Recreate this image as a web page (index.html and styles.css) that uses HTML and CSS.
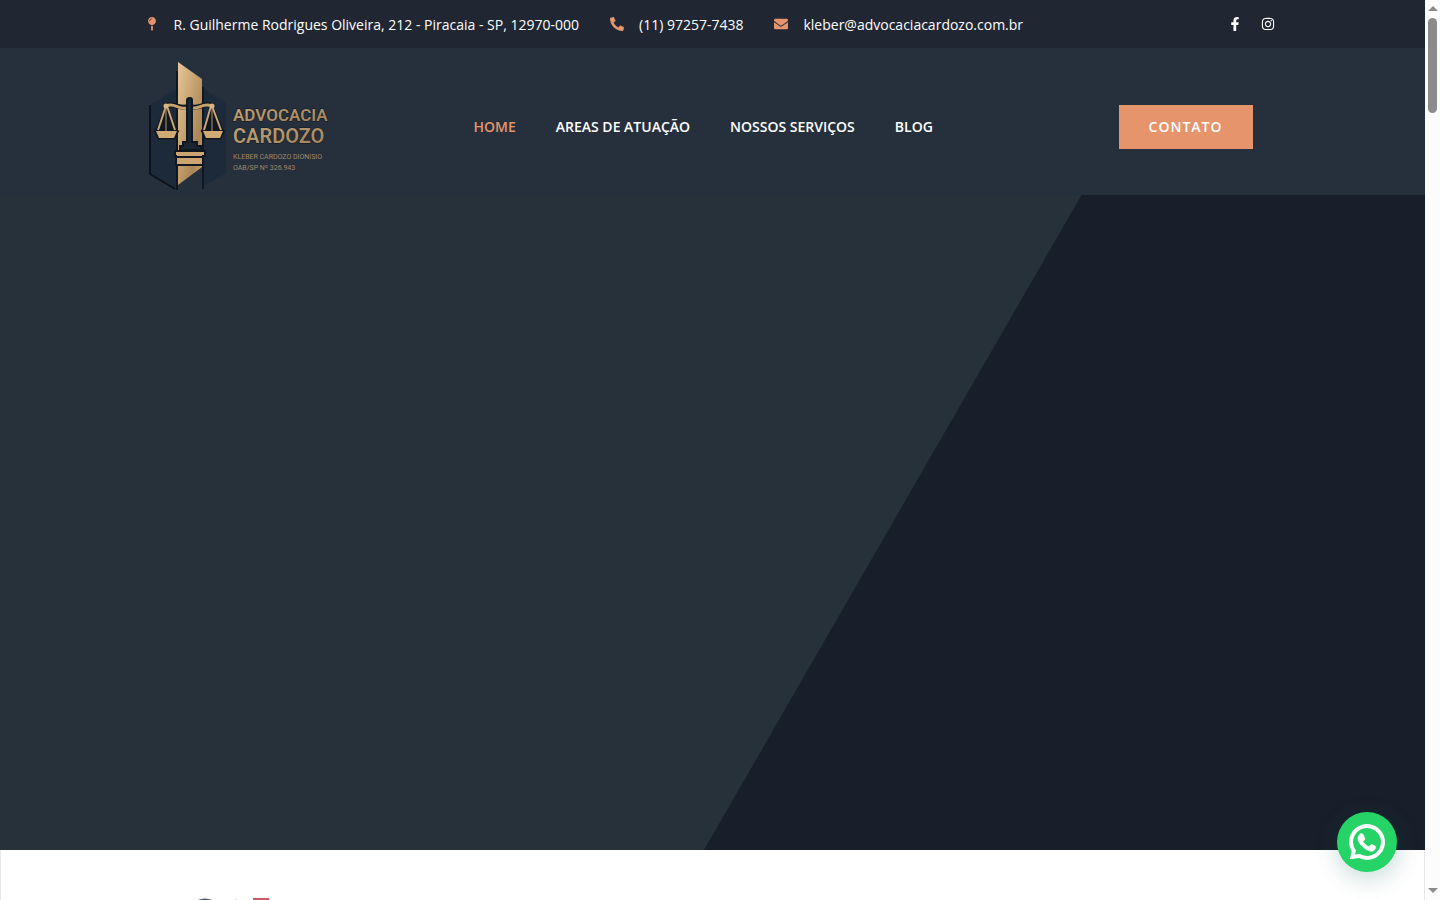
FILE: index.html
```
<!DOCTYPE html>
<html lang="pt-BR">
<head>
<meta charset="utf-8">
<meta name="viewport" content="width=device-width, initial-scale=1">
<title>Advocacia Cardozo</title>
<link rel="stylesheet" href="styles.css">
</head>
<body>
<div class="window">
  <div class="page">
    <div class="topbar">
      <div class="container topbar-inner">
        <ul class="contacts">
          <li><svg class="icon" viewBox="0 0 288 512" aria-hidden="true"><path d="M112 316.94v156.69l22.02 33.02c4.75 7.12 15.22 7.12 19.97 0L176 473.63V316.94c-10.39 1.92-21.06 3.06-32 3.06s-21.61-1.14-32-3.06zM144 0C64.47 0 0 64.47 0 144s64.47 144 144 144 144-64.47 144-144S223.53 0 144 0zm0 76c-37.5 0-68 30.5-68 68 0 6.62-5.38 12-12 12s-12-5.38-12-12c0-50.73 41.28-92 92-92 6.62 0 12 5.38 12 12s-5.38 12-12 12z"/></svg><span>R. Guilherme Rodrigues Oliveira, 212 - Piracaia - SP, 12970-000</span></li>
          <li><svg class="icon" viewBox="0 0 512 512" aria-hidden="true"><path d="M493.4 24.6l-104-24c-11.3-2.6-22.9 3.3-27.5 13.9l-48 112c-4.2 9.8-1.4 21.3 6.9 28l60.6 49.6c-36 76.7-98.9 140.5-177.2 177.2l-49.6-60.6c-6.8-8.3-18.2-11.1-28-6.9l-112 48C3.900 366.500-2 378.100.6 389.400l24 104C27.100 504.200 36.700 512 48 512c256.100 0 464-207.500 464-464 0-11.200-7.700-20.900-18.600-23.400z" transform="matrix(-1 0 0 1 512 0)"/></svg><span>(11) 97257-7438</span></li>
          <li><svg class="icon" viewBox="0 0 512 512" aria-hidden="true"><path d="M502.3 190.800c3.900-3.100 9.700-.2 9.700 4.700V400c0 26.500-21.500 48-48 48H48c-26.500 0-48-21.500-48-48V195.600c0-5 5.700-7.800 9.700-4.700 22.400 17.400 52.100 39.500 154.100 113.600 21.100 15.400 56.700 47.800 92.200 47.600 35.700.3 72-32.800 92.300-47.600 102-74.100 131.600-96.300 154-113.700zM256 320c23.200.4 56.600-29.200 73.400-41.400 132.700-96.300 142.800-104.700 173.400-128.700 5.800-4.500 9.200-11.500 9.200-18.900v-19c0-26.500-21.500-48-48-48H48c-26.500 0-48 21.500-48 48v19c0 7.400 3.400 14.300 9.200 18.900 30.600 23.900 40.700 32.400 173.400 128.700 16.800 12.200 50.200 41.800 73.400 41.400z"/></svg><span>kleber@advocaciacardozo.com.br</span></li>
        </ul>
        <div class="social">
          <a href="#" aria-label="Facebook"><svg class="icon" viewBox="0 0 320 512"><path d="M279.140 288l14.220-92.660h-88.910v-60.130c0-25.350 12.420-50.060 52.240-50.060h40.420V6.260S260.430 0 225.360 0c-73.220 0-121.080 44.380-121.080 124.720v70.620H22.890V288h81.390v224h100.170V288z"/></svg></a>
          <a href="#" aria-label="Instagram"><svg class="icon" viewBox="0 0 448 512"><path d="M224.100 141c-63.600 0-114.900 51.300-114.900 114.900s51.300 114.900 114.900 114.900S339 319.500 339 255.900 287.700 141 224.100 141zm0 189.600c-41.100 0-74.700-33.500-74.700-74.700s33.500-74.700 74.700-74.700 74.700 33.500 74.700 74.700-33.600 74.700-74.700 74.700zm146.400-194.300c0 14.900-12 26.800-26.800 26.800-14.900 0-26.800-12-26.800-26.800s12-26.800 26.800-26.800 26.800 12 26.800 26.800zm76.100 27.200c-1.700-35.900-9.900-67.700-36.200-93.900-26.200-26.200-58-34.400-93.900-36.200-37-2.100-147.900-2.100-184.900 0-35.800 1.700-67.600 9.900-93.900 36.100s-34.400 58-36.200 93.900c-2.100 37-2.100 147.900 0 184.900 1.700 35.900 9.900 67.700 36.200 93.900s58 34.400 93.900 36.200c37 2.100 147.900 2.100 184.900 0 35.900-1.700 67.700-9.900 93.900-36.200 26.200-26.200 34.400-58 36.200-93.900 2.100-37 2.100-147.800 0-184.800zM398.800 388c-7.800 19.600-22.900 34.700-42.600 42.600-29.500 11.700-99.500 9-132.100 9s-102.700 2.600-132.100-9c-19.600-7.800-34.700-22.900-42.600-42.600-11.700-29.500-9-99.500-9-132.100s-2.600-102.700 9-132.100c7.800-19.600 22.900-34.700 42.600-42.600 29.500-11.700 99.500-9 132.100-9s102.700-2.600 132.100 9c19.600 7.800 34.700 22.900 42.600 42.600 11.700 29.500 9 99.500 9 132.100s2.700 102.700-9 132.100z"/></svg></a>
        </div>
      </div>
    </div>

    <header class="header">
      <div class="container header-inner">
        <a class="logo" href="#" aria-label="Advocacia Cardozo">
          <svg viewBox="1 0 190 135" width="190" height="135">
            <defs>
              <linearGradient id="gold" x1="0" y1="0" x2="1" y2="1">
                <stop offset="0" stop-color="#e6c697"/><stop offset=".45" stop-color="#c4a06d"/><stop offset=".75" stop-color="#ab8555"/><stop offset="1" stop-color="#cfab79"/>
              </linearGradient>
              <linearGradient id="type" x1="0" y1="0" x2="1" y2="1">
                <stop offset="0" stop-color="#c4a578"/><stop offset="1" stop-color="#a08059"/>
              </linearGradient>
            </defs>
            <path d="M9 45L35 30V131L9 115Z" fill="#1d2a39"/>
            <path d="M60 29L84 44V114L60 128Z" fill="#1d2a39"/>
            <path d="M8 46V115L33 130" fill="none" stroke="#0d131c" stroke-width="2"/>
            <path d="M62 30L84 44V114L62 127" fill="none" stroke="#222d39"/>
            <path d="M36 3L60 20V108L36 126Z" fill="url(#gold)"/>
            <path d="M35 12V131M61 28V130" stroke="#101720" stroke-width="2"/>
            <path d="M23 47C32 42 38 52 47 47C56 52 62 42 71 47" fill="none" stroke="#101720" stroke-width="5"/>
            <path d="M24 47C32 43 37 51 44 49M51 49C57 50 62 43 70 47" fill="none" stroke="#c9a26f" stroke-width="3"/>
            <g stroke="#101720" stroke-width="3" fill="#101720"><path d="M24 48L15 71H34ZM70 48L61 71H80Z"/><path d="M14 73H35L32 79H17ZM61 73H81L78 79H64Z"/></g>
            <g fill="none" stroke="#c9a675" stroke-width="2"><path d="M24 47L16 71M25 47L33 71M69 47L62 71M70 47L79 71"/></g>
            <path d="M24 49V72M70 49V72" stroke="#b69465"/>
            <circle cx="24" cy="47" r="2.500" fill="#d8b583"/><circle cx="70" cy="47" r="2.500" fill="#d8b583"/>
            <path d="M14 72H35L32 79H17ZM61 72H81L78 79H64Z" fill="#d0aa74"/>
            <path d="M45 41Q45 39 48 39Q50 39 50 41V83H55V87H59V91H38V87H41V83H45Z" fill="#1a2532" stroke="#101720" stroke-width="2"/>
            <path d="M33 92H63V97H61V106H34V97H33Z" fill="#cba570" stroke="#101720" stroke-width="2"/>
            <path d="M34 98H62" stroke="#101720" stroke-width="2"/>
            <g class="logo-text"><text x="91" y="62" class="logo-first">ADVOCACIA</text><text x="91" y="84" class="logo-second">CARDOZO</text></g>
            <g class="logo-small"><text x="91" y="100">KLEBER CARDOZO DIONISIO</text><text x="91" y="111">OAB/SP Nº 326.943</text></g>
          </svg>
        </a>
        <nav class="nav">
          <a class="active" href="#">HOME</a>
          <a href="#">AREAS DE ATUAÇÃO</a>
          <a href="#">NOSSOS SERVIÇOS</a>
          <a href="#">BLOG</a>
        </nav>
        <a class="cta" href="#">CONTATO</a>
      </div>
    </header>

    <main class="main">
      <section class="hero"><div class="hero-shade"></div></section>
      <section class="next">
        <svg class="next-art" width="80" height="60" viewBox="0 0 80 60" aria-hidden="true">
          <circle cx="12" cy="18" r="16" fill="none" stroke="#4b5868" stroke-width="3"/>
          <path d="M43 1V12" stroke="#efb2b2"/><path d="M60 0H76V12H60Z" fill="#c85b61"/>
        </svg>
      </section>
    </main>
    <button class="whatsapp" type="button" aria-label="WhatsApp">
      <svg viewBox="0 0 60 60" width="60" height="60">
        <path d="M12 30A18 18 0 1 1 22 46.100L12.800 47.300L14.700 39.200A18 18 0 0 1 12 30ZM16 30A14 14 0 0 0 19 38.500L17.800 42.700L22.500 41.800A14 14 0 1 0 16 30Z" fill="#fff" fill-rule="evenodd"/>
        <path d="M22.300 22.900Q24 20.800 25.800 22.100L27.800 26.500Q28.200 27.700 25.900 29.500C27.200 32 29.500 34 32 34.900L34 32.700Q34.800 32.200 38.300 34.200Q39 34.800 38 37.300C36.500 39.300 34.300 39.800 31 38.300C26.500 36.300 22.900 32.500 21.300 28.600Q20.300 25.300 22.300 22.900Z" fill="#fff" stroke="#fff" stroke-width=".7"/>
      </svg>
    </button>
  </div>
  <div class="scrollbar" aria-hidden="true"><i class="arrow up"></i><i class="thumb"></i><i class="arrow down"></i></div>
</div>
</body>
</html>
```
FILE: styles.css
```
* { box-sizing: border-box; }
body { margin: 0; font-family: "Open Sans", sans-serif; font-size: 14px; color: #fff; }
a { color: inherit; text-decoration: none; }

.window { display: grid; grid-template-columns: 1fr 15px; height: 100vh; overflow: hidden; }
.page { position: relative; display: flex; flex-direction: column; min-width: 0; min-height: 0; background: #fff; }
.container { width: 100%; max-width: 1140px; margin: 0 auto; }

.topbar { background: #202632; }
.topbar-inner { display: flex; align-items: center; justify-content: space-between; height: 48px; }
.contacts { display: flex; gap: 29px; margin: 0; padding: 0; list-style: none; }
.contacts li { display: flex; align-items: center; gap: 13px; line-height: 20px; white-space: nowrap; }
.icon { display: block; width: 18px; height: 14px; fill: currentColor; }
.contacts .icon { fill: #e6946b; }
.contacts span { padding-top: 1px; }
.social { display: flex; gap: 15px; padding-right: 6px; }

.header { background: #26303c; }
.header-inner { display: grid; grid-template-columns: 331px 1fr auto; align-items: center; padding: 11px 30px 1px 0; }
.logo svg { display: block; }
.logo-text { fill: url(#type); stroke: #0f161f; stroke-width: 1px; paint-order: stroke; font-family: Roboto, sans-serif; font-weight: 600; }
.logo-first { font-size: 17px; }
.logo-second { font-size: 20px; }
.logo-small { fill: #a18767; font-family: Roboto, sans-serif; font-size: 7px; }
.nav { display: flex; gap: 40px; font-weight: 600; line-height: 20px; white-space: nowrap; }
.nav .active { color: #e6946b; }
.cta { padding: 12px 30px; background: #e6946b; font-weight: 600; line-height: 20px; letter-spacing: 1px; }

.main { display: flex; flex: 1; flex-direction: column; min-height: 0; }
.hero { flex: 1; background: #27313a; }
.hero-shade { height: 100%; background: #191f2a; clip-path: polygon(75.9% 0, 100% 0, 100% 100%, 49.4% 100%); }
.next { height: 50px; padding: 48px 192px 0; overflow: hidden; background: #fff; border: solid #e6e7e8; border-width: 0 1px; }
.next-art { display: block; }

.whatsapp { position: absolute; right: 28px; bottom: 28px; width: 60px; height: 60px; padding: 0; border: 0; border-radius: 50%; background: #25d366; box-shadow: 1px 6px 24px rgba(7, 94, 84, .24); }
.whatsapp svg { display: block; }

.scrollbar { display: flex; flex-direction: column; align-items: center; padding: 6px 0 7px; background: #fcfcfc; }
.arrow { border: solid transparent; border-width: 0 5px; }
.up { border-bottom: 5px solid #8b8b8b; }
.down { margin-top: auto; border-top: 5px solid #8b8b8b; }
.thumb { width: 9px; height: 95px; margin-top: 7px; border-radius: 5px; background: #8b8b8b; }
```
